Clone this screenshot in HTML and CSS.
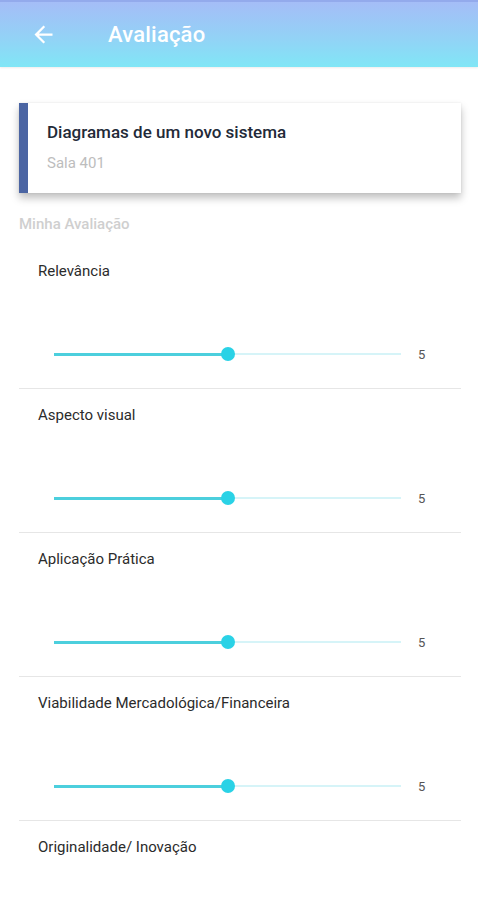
FILE: index.html
```html
<!DOCTYPE html>
<html lang="pt">
<head>
    <meta charset="UTF-8">
    <meta name="viewport" content="width=device-width, initial-scale=1.0">
    <title>Avaliação</title>
    <link rel="stylesheet" href="styles.css">
</head>
<body>
    <header class="app-bar">
        <svg class="back" width="27" height="27" viewBox="0 0 24 24">
            <path d="M20 11H7.83l5.59-5.59L12 4l-8 8 8 8 1.41-1.41L7.83 13H20v-2z" fill="#fff"/>
        </svg>
        <h1 class="title">Avaliação</h1>
    </header>

    <main class="content">
        <div class="card">
            <div class="card-title">Diagramas de um novo sistema</div>
            <div class="card-sub">Sala 401</div>
        </div>

        <div class="section-title">Minha Avaliação</div>

        <div class="criteria">
            <div class="criterion">
                <div class="label">Relevância</div>
                <div class="slider-row">
                    <div class="track"><div class="fill" style="width: 50%"><span class="thumb"></span></div></div>
                    <div class="value">5</div>
                </div>
            </div>
            <div class="criterion">
                <div class="label">Aspecto visual</div>
                <div class="slider-row">
                    <div class="track"><div class="fill" style="width: 50%"><span class="thumb"></span></div></div>
                    <div class="value">5</div>
                </div>
            </div>
            <div class="criterion">
                <div class="label">Aplicação Prática</div>
                <div class="slider-row">
                    <div class="track"><div class="fill" style="width: 50%"><span class="thumb"></span></div></div>
                    <div class="value">5</div>
                </div>
            </div>
            <div class="criterion">
                <div class="label">Viabilidade Mercadológica/Financeira</div>
                <div class="slider-row">
                    <div class="track"><div class="fill" style="width: 50%"><span class="thumb"></span></div></div>
                    <div class="value">5</div>
                </div>
            </div>
            <div class="criterion last">
                <div class="label">Originalidade/ Inovação</div>
            </div>
        </div>
    </main>
</body>
</html>
```

FILE: styles.css
```css
body {
    margin: 0;
    padding: 0;
    background: #fff;
    font-family: Roboto, "Noto Sans", Arial, sans-serif;
    color: #2a2a2a;
}

.app-bar {
    height: 67px;
    display: flex;
    align-items: center;
    padding-left: 30px;
    box-sizing: border-box;
    border-top: 2px solid #93aaec;
    background: linear-gradient(180deg, #a5bdf7 0%, #93d2f6 55%, #80e6f6 100%);
    box-shadow: 0 1px 2px rgba(0,0,0,0.08);
}

.back {
    display: block;
}

.title {
    margin: 0 0 0 51px;
    font-size: 22px;
    font-weight: 500;
    color: #fff;
    letter-spacing: 0.2px;
}

.content {
    padding: 36px 17px 0 19px;
}

.card {
    height: 90px;
    box-sizing: border-box;
    padding: 18px 0 0 19px;
    border-left: 9px solid #4b65a3;
    background: #fff;
    box-shadow: 0 5px 8px rgba(0,0,0,0.25), 0 0 2px rgba(0,0,0,0.08);
}

.card-title {
    font-size: 17px;
    line-height: 22px;
    font-weight: 500;
    color: #232a38;
}

.card-sub {
    margin-top: 10px;
    font-size: 15px;
    line-height: 20px;
    color: #bdbdbd;
}

.section-title {
    margin-top: 21px;
    font-size: 15px;
    line-height: 20px;
    font-weight: 500;
    color: #cfcfcf;
}

.criteria {
    margin-top: 11px;
}

.criterion {
    padding: 16px 0 24px 19px;
    border-bottom: 1px solid #e6e6e6;
}

.criterion.last {
    border-bottom: none;
}

.label {
    font-size: 15px;
    line-height: 20px;
    color: #2b2b2b;
}

.slider-row {
    display: flex;
    align-items: center;
    height: 20px;
    margin-top: 63px;
    padding-left: 16px;
}

.track {
    width: 347px;
    height: 2px;
    background: #d6f4f8;
}

.fill {
    position: relative;
    height: 3px;
    margin-top: -0.5px;
    background: #4ccfdd;
}

.thumb {
    position: absolute;
    right: -7px;
    top: -5.5px;
    width: 14px;
    height: 14px;
    border-radius: 50%;
    background: #2ad2e6;
}

.value {
    margin-left: 17px;
    font-size: 13px;
    color: #555;
}
```
